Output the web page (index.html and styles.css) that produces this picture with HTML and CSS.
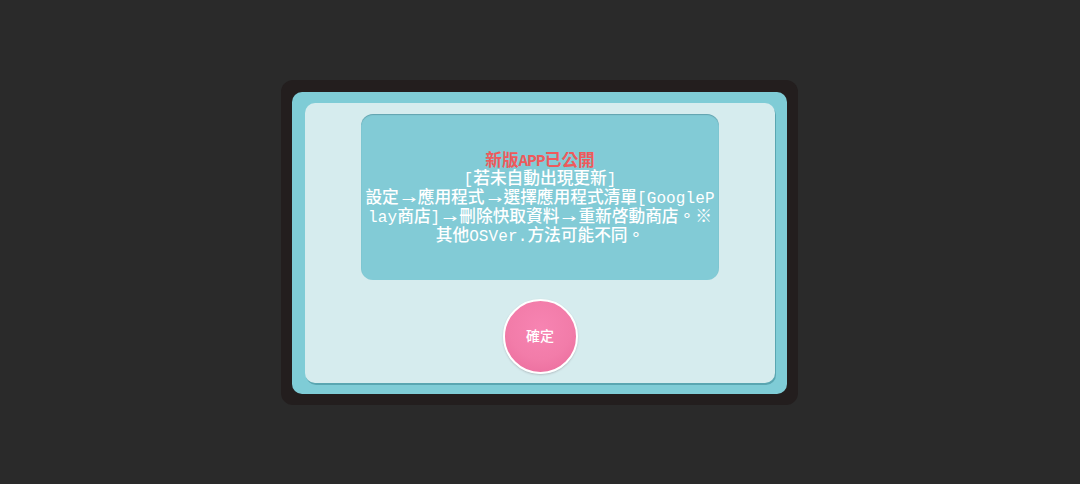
FILE: index.html
```html
<!DOCTYPE html>
<html lang="zh-Hant">
<head>
<meta charset="utf-8">
<title>新版APP已公開</title>
<link rel="stylesheet" href="styles.css">
</head>
<body>
<div class="stage">
  <div class="dialog">
    <div class="frame">
      <div class="panel">
        <div class="message">
          <div class="text">
            <div class="line title">新版<span class="lat">APP</span>已公開</div>
            <div class="line"><span class="lat">[</span>若未自動出現更新<span class="lat">]</span></div>
            <div class="line">設定<span class="arr">→</span>應用程式<span class="arr">→</span>選擇應用程式清單<span class="lat">[GoogleP</span></div>
            <div class="line"><span class="lat">lay</span>商店<span class="lat">]</span><span class="arr">→</span>刪除快取資料<span class="arr">→</span>重新啓動商店。※</div>
            <div class="line">其他<span class="lat">OSVer.</span>方法可能不同。</div>
          </div>
        </div>
        <div class="actions">
          <button class="ok">確定</button>
        </div>
      </div>
    </div>
  </div>
</div>
</body>
</html>
```
FILE: styles.css
```css
html, body {
  margin: 0;
  padding: 0;
  background: #2a2a2a;
  width: 1080px;
  height: 484px;
  overflow: hidden;
  font-family: "Noto Sans CJK TC", "Noto Sans", sans-serif;
}

.stage {
  width: 1080px;
  height: 484px;
  display: flex;
  align-items: center;
  justify-content: center;
}

.dialog {
  width: 517px;
  height: 325px;
  box-sizing: border-box;
  padding: 12px 11px 11px 11px;
  background: #231e1e;
  border-radius: 12px;
  margin-left: -1px;
}

.frame {
  height: 100%;
  box-sizing: border-box;
  background: #7fccd6;
  border-radius: 10px;
  padding: 11px 12px 11px 13px;
}

.panel {
  height: 100%;
  box-sizing: border-box;
  background: #d6ecee;
  border-radius: 10px;
  box-shadow: 1px 2px 0 #5aa6b1;
  padding: 11px 56px 0 56px;
  display: flex;
  flex-direction: column;
  align-items: center;
}

.message {
  width: 358px;
  height: 166px;
  box-sizing: border-box;
  background: #82cbd6;
  border-radius: 12px;
  box-shadow: inset 0 1px 1px rgba(40, 90, 100, 0.35);
  display: flex;
  align-items: center;
  justify-content: center;
}

.text {
  color: #ffffff;
  font-size: 16.7px;
  font-weight: 500;
  text-align: center;
  white-space: nowrap;
}

.line {
  height: 18.75px;
  line-height: 18.75px;
}

.title {
  color: #ee5a5c;
  font-weight: 700;
}

.lat {
  font-family: "Liberation Mono", "DejaVu Sans Mono", monospace;
  font-size: 16px;
  font-weight: 400;
  letter-spacing: 0.1px;
}

.title .lat {
  font-weight: 700;
  letter-spacing: -0.9px;
}

.arr {
  display: inline-block;
  width: 19px;
  text-align: center;
  font-family: "DejaVu Sans", sans-serif;
  font-size: 13px;
  font-weight: 400;
  transform: scale(1.35, 0.85) translateY(1px);
}

.actions {
  margin-top: 19px;
  display: flex;
  justify-content: center;
}

.ok {
  width: 75px;
  height: 75px;
  border-radius: 50%;
  border: 2px solid #ffffff;
  background: radial-gradient(circle at 50% 38%, #f784b2 0%, #f27ca9 55%, #e9699a 100%);
  box-shadow: 0 1px 2px rgba(80, 60, 70, 0.25);
  color: #ffffff;
  font-family: "Noto Sans CJK TC", sans-serif;
  font-size: 14px;
  font-weight: 500;
  padding: 0 0 3px 0;
  cursor: pointer;
}
```
